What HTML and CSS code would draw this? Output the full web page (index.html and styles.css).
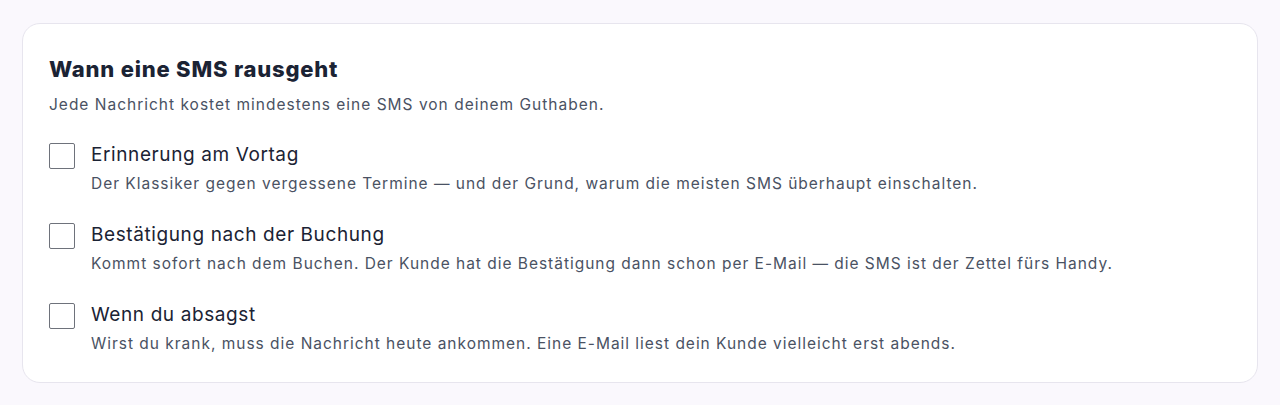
FILE: index.html
```html
<!DOCTYPE html>
<html lang="de">
<head>
<meta charset="utf-8">
<title>SMS</title>
<link rel="stylesheet" href="styles.css">
</head>
<body>
<section class="card">
  <h2 class="title">Wann eine SMS rausgeht</h2>
  <p class="subtitle">Jede Nachricht kostet mindestens eine SMS von deinem Guthaben.</p>
  <ul class="options">
    <li class="option">
      <span class="box"></span>
      <div class="text">
        <div class="label">Erinnerung am Vortag</div>
        <div class="desc">Der Klassiker gegen vergessene Termine — und der Grund, warum die meisten SMS überhaupt einschalten.</div>
      </div>
    </li>
    <li class="option">
      <span class="box"></span>
      <div class="text">
        <div class="label">Bestätigung nach der Buchung</div>
        <div class="desc">Kommt sofort nach dem Buchen. Der Kunde hat die Bestätigung dann schon per E-Mail — die SMS ist der Zettel fürs Handy.</div>
      </div>
    </li>
    <li class="option">
      <span class="box"></span>
      <div class="text">
        <div class="label">Wenn du absagst</div>
        <div class="desc">Wirst du krank, muss die Nachricht heute ankommen. Eine E-Mail liest dein Kunde vielleicht erst abends.</div>
      </div>
    </li>
  </ul>
</section>
</body>
</html>
```
FILE: styles.css
```css
html, body {
  margin: 0;
  padding: 0;
}
body {
  background: #faf8fd;
  font-family: Inter, "Noto Sans", sans-serif;
  padding: 23px 22px;
  height: 405px;
  box-sizing: border-box;
}
.card {
  background: #ffffff;
  border: 1px solid #e7e5ee;
  border-radius: 18px;
  padding: 28px 26px 26px;
}
.title {
  margin: 0;
  font-size: 22px;
  line-height: 34px;
  font-weight: 800;
  color: #1b2334;
  letter-spacing: 0.8px;
}
.subtitle {
  margin: 7px 0 0;
  font-size: 15.5px;
  line-height: 24px;
  color: #4a5263;
  letter-spacing: 1px;
}
.options {
  list-style: none;
  margin: 24px 0 0;
  padding: 0;
  display: flex;
  flex-direction: column;
  gap: 25px;
}
.option {
  display: flex;
  gap: 16px;
  align-items: flex-start;
}
.box {
  flex: none;
  box-sizing: border-box;
  width: 26px;
  height: 26px;
  border: 1.5px solid #6e727b;
  border-radius: 2px;
  margin-top: 2px;
}
.label {
  font-size: 19px;
  line-height: 28px;
  color: #1b2334;
  letter-spacing: 0.6px;
}
.desc {
  margin-top: 3px;
  font-size: 15.5px;
  line-height: 24px;
  color: #4a5263;
  letter-spacing: 0.98px;
}
```
